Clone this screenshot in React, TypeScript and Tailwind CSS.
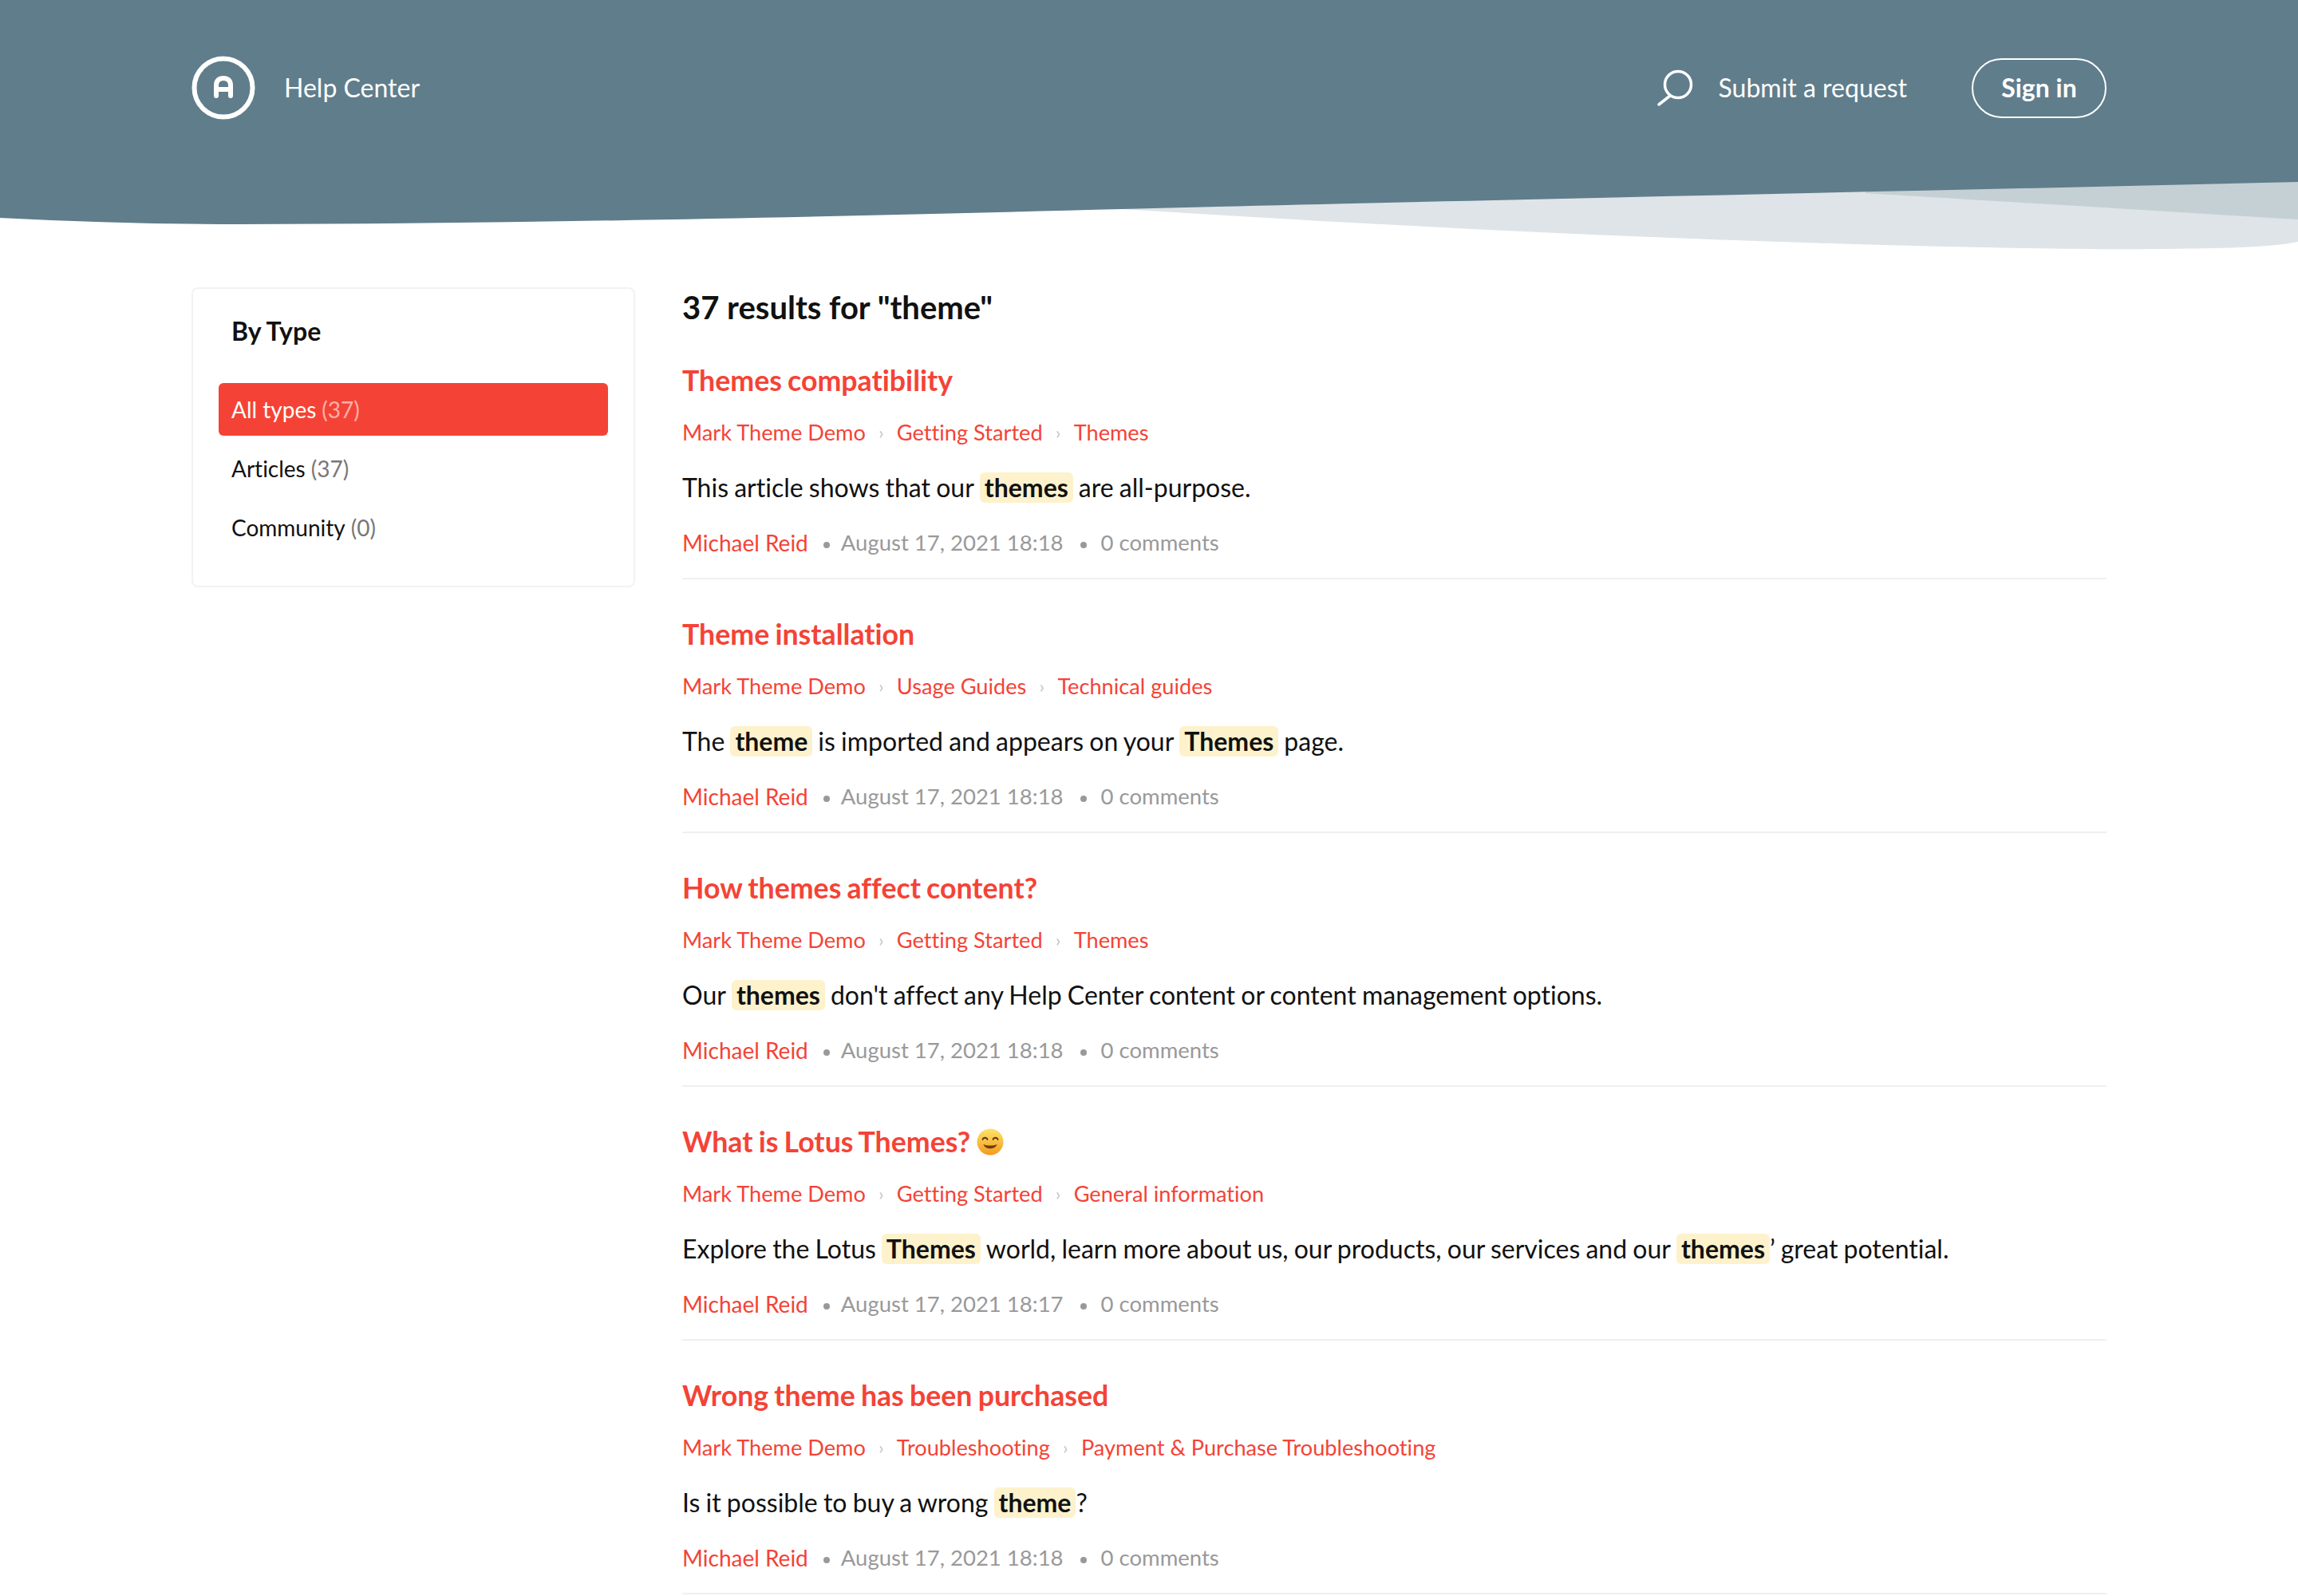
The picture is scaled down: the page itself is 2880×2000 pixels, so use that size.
import React from "react";

type Article = {
  title: string;
  emoji?: boolean;
  crumbs: string[];
  snippet: (string | { mark: string })[];
  time: string;
};

const articles: Article[] = [
  {
    title: "Themes compatibility",
    crumbs: ["Mark Theme Demo", "Getting Started", "Themes"],
    snippet: ["This article shows that our", { mark: "themes" }, "are all-purpose."],
    time: "August 17, 2021 18:18",
  },
  {
    title: "Theme installation",
    crumbs: ["Mark Theme Demo", "Usage Guides", "Technical guides"],
    snippet: ["The", { mark: "theme" }, "is imported and appears on your", { mark: "Themes" }, "page."],
    time: "August 17, 2021 18:18",
  },
  {
    title: "How themes affect content?",
    crumbs: ["Mark Theme Demo", "Getting Started", "Themes"],
    snippet: ["Our", { mark: "themes" }, "don't affect any Help Center content or content management options."],
    time: "August 17, 2021 18:18",
  },
  {
    title: "What is Lotus Themes?",
    emoji: true,
    crumbs: ["Mark Theme Demo", "Getting Started", "General information"],
    snippet: [
      "Explore the Lotus",
      { mark: "Themes" },
      "world, learn more about us, our products, our services and our",
      { mark: "themes" },
      "’ great potential.",
    ],
    time: "August 17, 2021 18:17",
  },
  {
    title: "Wrong theme has been purchased",
    crumbs: ["Mark Theme Demo", "Troubleshooting", "Payment & Purchase Troubleshooting"],
    snippet: ["Is it possible to buy a wrong", { mark: "theme" }, "?"],
    time: "August 17, 2021 18:18",
  },
];

const filters = [
  { label: "All types", count: 37, active: true },
  { label: "Articles", count: 37, active: false },
  { label: "Community", count: 0, active: false },
];

const Logo = () => (
  <svg width="80" height="80" viewBox="0 0 80 80" fill="none" stroke="white">
    <circle cx="40" cy="40" r="36.5" strokeWidth="6" />
    <path
      d="M31 50V37c0-6 3.500-9 9-9s9 3 9 9v13M31 42h18"
      strokeWidth="6"
      strokeLinecap="round"
      strokeLinejoin="round"
    />
  </svg>
);

const SearchIcon = () => (
  <svg width="46" height="46" viewBox="0 0 46 46" fill="none" stroke="white" strokeWidth="3.500" strokeLinecap="round">
    <circle cx="27" cy="19" r="16.500" />
    <path d="M17 33L3 44" />
  </svg>
);

const Smile = () => (
  <svg width="34" height="34" viewBox="0 0 34 34" className="ml-[8px] shrink-0">
    <defs>
      <linearGradient id="smile" x1="0" y1="0" x2="0" y2="1">
        <stop offset="0" stopColor="#fde36a" />
        <stop offset="1" stopColor="#f59a1c" />
      </linearGradient>
    </defs>
    <circle cx="17" cy="17" r="16.500" fill="url(#smile)" />
    <path d="M7.500 14c1-3 5-3 6 0M20.500 14c1-3 5-3 6 0" fill="none" stroke="#5b3a12" strokeWidth="1.800" strokeLinecap="round" />
    <path d="M8.500 20c2 7 15 7 17 0c-5 2-12 2-17 0z" fill="#6b3f14" />
  </svg>
);

const ArticleItem = ({ article }: { article: Article }) => (
  <article className="mb-[44px] border-b-2 border-[#f0f0f0] pb-[24px]">
    <h3 className="flex items-center text-[35.7px] leading-[50px] font-bold text-[#f44336] [word-spacing:-1.5px]">
      {article.title}
      {article.emoji && <Smile />}
    </h3>
    <div className="mt-[20px] flex items-center text-[27.2px] leading-[40px] text-[#f44336]">
      {article.crumbs.map((crumb, i) => (
        <React.Fragment key={crumb}>
          {i > 0 && <span className="w-[39px] text-center text-[22px] text-[#c4c4c4]">›</span>}
          <span>{crumb}</span>
        </React.Fragment>
      ))}
    </div>
    <p className="mt-[29px] flex items-center text-[32px] leading-[40px] text-[#111111] [word-spacing:-1px]">
      {article.snippet.map((part, i) => {
        if (typeof part === "string") return <span key={i}>{part}</span>;
        const next = article.snippet[i + 1];
        // punctuation sits right against the highlight
        const tight = typeof next === "string" && /^[’?]/.test(next);
        return (
          <mark
            key={i}
            className={
              tight
                ? "ml-[7px] h-[38px] rounded-[6px] bg-[#fdf2cc] px-[6px] leading-[38px] font-bold text-[#111111]"
                : "mx-[7px] h-[38px] rounded-[6px] bg-[#fdf2cc] px-[6px] leading-[38px] font-bold text-[#111111]"
            }
          >
            {part.mark}
          </mark>
        );
      })}
    </p>
    <div className="mt-[29px] flex items-center text-[27.5px] leading-[40px] text-[#999999]">
      <span className="text-[28px] text-[#f44336]">Michael Reid</span>
      <span className="mt-[6px] mr-[14px] ml-[19px] h-[8px] w-[8px] rounded-full bg-[#999999]" />
      <span>{article.time}</span>
      <span className="mt-[6px] mr-[18px] ml-[21px] h-[8px] w-[8px] rounded-full bg-[#999999]" />
      <span>0 comments</span>
    </div>
  </article>
);

export default function App() {
  return (
    <div className="h-[2000px] overflow-hidden bg-white font-[Lato,sans-serif] [font-variant-ligatures:none]">
      <header className="h-[228px] bg-[#607d8b] pt-[70px]">
        <div className="mx-[240px] flex items-center justify-between text-white">
          <div className="flex items-center gap-[36px]">
            <Logo />
            <span className="text-[32px]">Help Center</span>
          </div>
          <div className="flex items-center">
            <SearchIcon />
            <span className="ml-[32px] text-[32px]">Submit a request</span>
            <button className="ml-[81px] h-[75px] w-[169px] rounded-full border-2 border-white text-[32px] font-bold">
              Sign in
            </button>
          </div>
        </div>
      </header>

      <svg className="block h-[88px] w-full" viewBox="0 0 2880 88" preserveAspectRatio="none">
        <path d="M1406 34C1650 49 2000 70 2400 80C2520 83 2640 85 2700 84C2780 83 2840 83 2880 75V0H1406z" fill="#dfe4e8" />
        <path d="M2338 14C2500 24 2700 36 2880 47V0H2338z" fill="#c5d0d5" />
        <path d="M0 45C100 50 200 53 300 53C700 52 1100 42 1406 34C1800 24 2331 13 2880 0V-2H0z" fill="#607d8b" />
      </svg>

      <main className="mx-[240px] mt-[44px] flex items-start">
        <aside className="h-[376px] w-[556px] shrink-0 rounded-[8px] border-2 border-[#f2f2f2] px-[32px] pt-[33px]">
          <h2 className="pl-[16px] text-[32px] leading-[40px] font-bold text-[#111111]">By Type</h2>
          <ul className="mt-[45px] flex flex-col gap-[8px]">
            {filters.map((f) => (
              <li
                key={f.label}
                className={
                  f.active
                    ? "flex h-[66px] items-center rounded-[6px] bg-[#f44336] pl-[16px] text-[28px] text-white"
                    : "flex h-[66px] items-center pl-[16px] text-[28px] text-[#111111]"
                }
              >
                {f.label}
                <span className={f.active ? "ml-[7px] text-[#fbb0aa]" : "ml-[7px] text-[#777777]"}>({f.count})</span>
              </li>
            ))}
          </ul>
        </aside>

        <section className="ml-[59px] flex-1">
          <h1 className="mb-[42px] text-[40px] leading-[50px] font-bold text-[#111111]">37 results for "theme"</h1>
          {articles.map((a) => (
            <ArticleItem key={a.title} article={a} />
          ))}
        </section>
      </main>
    </div>
  );
}
